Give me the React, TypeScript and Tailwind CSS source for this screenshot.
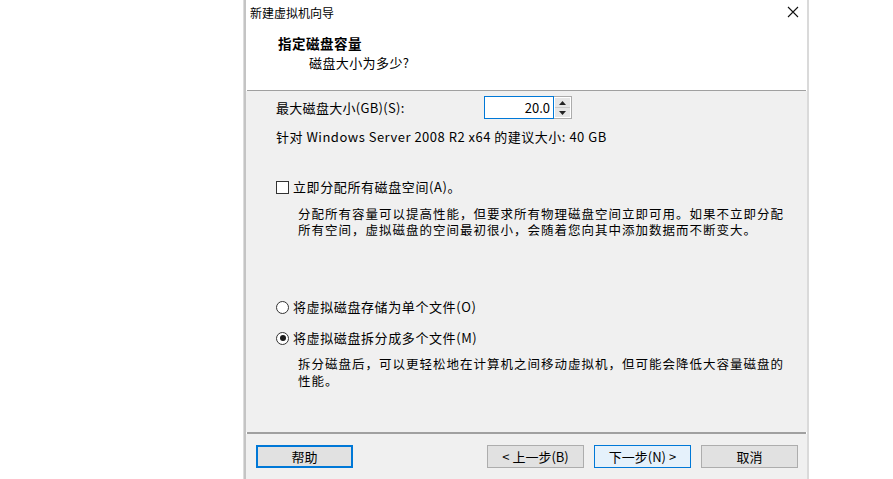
import React from "react";

const cjk = "font-['Noto_Sans_CJK_SC','Liberation_Sans',sans-serif]";

const Btn = ({
  label,
  variant = "normal",
}: {
  label: string;
  variant?: "normal" | "focus" | "hover";
}) => {
  const styles = {
    normal: "bg-[#e1e1e1] border border-[#adadad]",
    focus: "bg-[#e1e1e1] border-2 border-[#0078d7]",
    hover: "bg-[#e5f1fb] border border-[#0078d7]",
  };
  return (
    <div
      className={`${styles[variant]} w-[97px] h-[23px] flex items-center justify-center text-[13px] text-black leading-none`}
    >
      {label}
    </div>
  );
};

const Radio = ({ checked }: { checked?: boolean }) => (
  <span className="w-[13px] h-[13px] rounded-full border border-[#333333] bg-white flex items-center justify-center shrink-0">
    {checked && <span className="w-[6px] h-[6px] rounded-full bg-[#1a1a1a]" />}
  </span>
);

const App = () => {
  return (
    <div className={`${cjk} w-[893px] h-[479px] bg-white flex overflow-hidden`}>
      <div className="w-[243px] shrink-0" />

      {/* wizard window */}
      <div className="w-[566px] h-full flex border-l border-[#dcdcdc]">
        <div className="w-[2px] bg-[#c4c4c4]" />
        <div className="flex-1 flex flex-col border-r-2 border-[#dadada]">
          {/* header */}
          <div className="h-[90px] bg-white relative">
            <div className="pl-[4px] pt-[4px] h-[17px] text-[12px] leading-[17px] text-black">
              新建虚拟机向导
            </div>
            <svg
              className="absolute right-[8px] top-[6px]"
              width="12"
              height="12"
              viewBox="0 0 12 12"
            >
              <path d="M1 1 L11 11 M11 1 L1 11" stroke="#111" strokeWidth="1.1" />
            </svg>
            <div className="pl-[32px] mt-[17px] text-[13.5px] leading-[18px] font-bold text-black tracking-[0.5px]">
              指定磁盘容量
            </div>
            <div className="pl-[63px] mt-[2px] text-[13px] leading-[18px] text-black tracking-[0.4px]">
              磁盘大小为多少?
            </div>
          </div>
          <div className="h-px bg-[#a0a0a0] mx-[1px]" />

          {/* body */}
          <div className="flex-1 bg-[#f0f0f0] pl-[30px] pt-[5px] text-[13px] text-black whitespace-nowrap">
            <div className="flex items-center h-[23px]">
              <span className="w-[208px] tracking-[0.3px]">最大磁盘大小(GB)(S):</span>
              <div className="w-[70px] h-[23px] bg-white border border-[#0078d7] flex items-center justify-end pr-[3px] text-[13px]">
                20.0
              </div>
              <div className="w-[18px] h-[23px] flex flex-col border border-[#acacac] border-l-0 bg-white">
                <div className="flex-1 m-[1px] mb-0 bg-[#e5e5e5] border-b border-[#c8c8c8] flex items-center justify-center">
                  <svg width="7" height="4" viewBox="0 0 7 4">
                    <path d="M3.5 0 L7 4 L0 4 Z" fill="#222" />
                  </svg>
                </div>
                <div className="flex-1 m-[1px] mt-0 bg-[#e5e5e5] flex items-center justify-center">
                  <svg width="7" height="4" viewBox="0 0 7 4">
                    <path d="M0 0 L7 0 L3.5 4 Z" fill="#222" />
                  </svg>
                </div>
              </div>
            </div>

            <div className="mt-[10px] leading-[16px] tracking-[0.5px]">
              针对 Windows Server 2008 R2 x64 的建议大小: 40 GB
            </div>

            <div className="mt-[34px] flex items-center gap-[4px] leading-[16px]">
              <span className="w-[13px] h-[13px] border border-[#333333] bg-white shrink-0" />
              <span className="tracking-[0.6px]">立即分配所有磁盘空间(A)。</span>
            </div>

            <div className="mt-[11px] pl-[22px] text-[12.5px] leading-[16px] tracking-[1px]">
              <div>分配所有容量可以提高性能，但要求所有物理磁盘空间立即可用。如果不立即分配</div>
              <div>所有空间，虚拟磁盘的空间最初很小，会随着您向其中添加数据而不断变大。</div>
            </div>

            <div className="mt-[61px] flex items-center gap-[4px] leading-[16px]">
              <Radio />
              <span className="tracking-[0.6px]">将虚拟磁盘存储为单个文件(O)</span>
            </div>
            <div className="mt-[15px] flex items-center gap-[4px] leading-[16px]">
              <Radio checked />
              <span className="tracking-[0.6px]">将虚拟磁盘拆分成多个文件(M)</span>
            </div>

            <div className="mt-[9px] pl-[22px] text-[12.5px] leading-[17px] tracking-[1px]">
              <div>拆分磁盘后，可以更轻松地在计算机之间移动虚拟机，但可能会降低大容量磁盘的</div>
              <div>性能。</div>
            </div>
          </div>

          {/* footer */}
          <div className="h-[2px] bg-[#a0a0a0] mx-[1px]" />
          <div className="h-[45px] bg-[#f0f0f0] flex items-start pt-[11px] pl-[10px]">
            <Btn label="帮助" variant="focus" />
            <div className="ml-[134px] flex gap-[10px]">
              <Btn label="< 上一步(B)" />
              <Btn label="下一步(N) >" variant="hover" />
              <Btn label="取消" />
            </div>
          </div>
        </div>
      </div>

      <div className="flex-1" />
    </div>
  );
};

export default App;
